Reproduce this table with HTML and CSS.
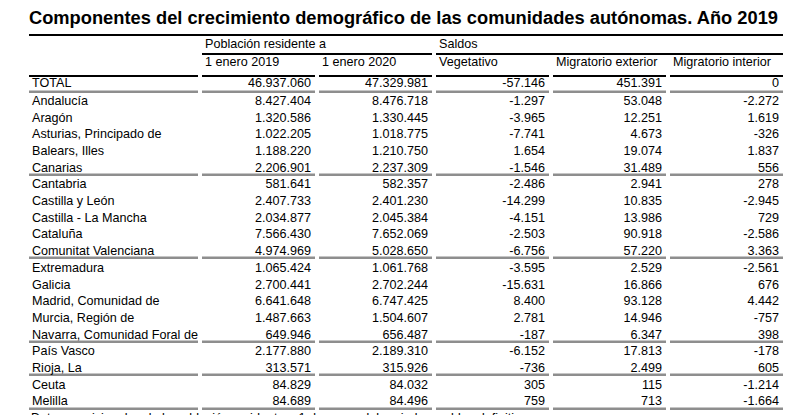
FILE: index.html
```html
<!DOCTYPE html>
<html lang="es">
<head>
<meta charset="utf-8">
<title>Componentes del crecimiento demográfico</title>
<link rel="stylesheet" href="styles.css">
</head>
<body>
<div class="page">
  <h1 class="title">Componentes del crecimiento demográfico de las comunidades autónomas. Año 2019</h1>
  <table class="data">
    <colgroup>
      <col class="c-label"><col class="c-num"><col class="c-num"><col class="c-num"><col class="c-num"><col class="c-num">
    </colgroup>
    <thead>
      <tr class="h1">
        <th class="blank"></th>
        <th colspan="2" class="grp">Población residente a</th>
        <th colspan="3" class="grp">Saldos</th>
      </tr>
      <tr class="h2">
        <th></th>
        <th>1 enero 2019</th>
        <th>1 enero 2020</th>
        <th>Vegetativo</th>
        <th>Migratorio exterior</th>
        <th>Migratorio interior</th>
      </tr>
    </thead>
    <tbody>
      <tr class="total sep"><td>TOTAL</td><td>46.937.060</td><td>47.329.981</td><td>-57.146</td><td>451.391</td><td>0</td></tr>
      <tr><td>Andalucía</td><td>8.427.404</td><td>8.476.718</td><td>-1.297</td><td>53.048</td><td>-2.272</td></tr>
      <tr><td>Aragón</td><td>1.320.586</td><td>1.330.445</td><td>-3.965</td><td>12.251</td><td>1.619</td></tr>
      <tr><td>Asturias, Principado de</td><td>1.022.205</td><td>1.018.775</td><td>-7.741</td><td>4.673</td><td>-326</td></tr>
      <tr><td>Balears, Illes</td><td>1.188.220</td><td>1.210.750</td><td>1.654</td><td>19.074</td><td>1.837</td></tr>
      <tr class="sep"><td>Canarias</td><td>2.206.901</td><td>2.237.309</td><td>-1.546</td><td>31.489</td><td>556</td></tr>
      <tr><td>Cantabria</td><td>581.641</td><td>582.357</td><td>-2.486</td><td>2.941</td><td>278</td></tr>
      <tr><td>Castilla y León</td><td>2.407.733</td><td>2.401.230</td><td>-14.299</td><td>10.835</td><td>-2.945</td></tr>
      <tr><td>Castilla - La Mancha</td><td>2.034.877</td><td>2.045.384</td><td>-4.151</td><td>13.986</td><td>729</td></tr>
      <tr><td>Cataluña</td><td>7.566.430</td><td>7.652.069</td><td>-2.503</td><td>90.918</td><td>-2.586</td></tr>
      <tr class="sep"><td>Comunitat Valenciana</td><td>4.974.969</td><td>5.028.650</td><td>-6.756</td><td>57.220</td><td>3.363</td></tr>
      <tr><td>Extremadura</td><td>1.065.424</td><td>1.061.768</td><td>-3.595</td><td>2.529</td><td>-2.561</td></tr>
      <tr><td>Galicia</td><td>2.700.441</td><td>2.702.244</td><td>-15.631</td><td>16.866</td><td>676</td></tr>
      <tr><td>Madrid, Comunidad de</td><td>6.641.648</td><td>6.747.425</td><td>8.400</td><td>93.128</td><td>4.442</td></tr>
      <tr><td>Murcia, Región de</td><td>1.487.663</td><td>1.504.607</td><td>2.781</td><td>14.946</td><td>-757</td></tr>
      <tr class="sep"><td>Navarra, Comunidad Foral de</td><td>649.946</td><td>656.487</td><td>-187</td><td>6.347</td><td>398</td></tr>
      <tr><td>País Vasco</td><td>2.177.880</td><td>2.189.310</td><td>-6.152</td><td>17.813</td><td>-178</td></tr>
      <tr class="sep"><td>Rioja, La</td><td>313.571</td><td>315.926</td><td>-736</td><td>2.499</td><td>605</td></tr>
      <tr><td>Ceuta</td><td>84.829</td><td>84.032</td><td>305</td><td>115</td><td>-1.214</td></tr>
      <tr class="sep"><td>Melilla</td><td>84.689</td><td>84.496</td><td>759</td><td>713</td><td>-1.664</td></tr>
    </tbody>
  </table>
  <p class="note">Datos provisionales de la población residente a 1 de enero del periodo y saldos definitivos</p>
</div>
</body>
</html>
```
FILE: styles.css
```css
html, body {
  margin: 0;
  padding: 0;
  background: #ffffff;
}

body {
  font-family: "Liberation Sans", Arial, sans-serif;
  color: #000000;
  overflow: hidden;
}

.page {
  padding: 8px 0 0 29px;
}

.title {
  margin: 0;
  width: 754px;
  font-size: 18.3px;
  font-weight: bold;
  line-height: 20px;
  padding-bottom: 6px;
  border-bottom: 2px solid #000000;
  white-space: nowrap;
}

.data {
  border-collapse: separate;
  border-spacing: 4px 0;
  margin-left: -4px;
  font-size: 12.6px;
  table-layout: fixed;
  width: 762px;
}

.c-label { width: 169px; }
.c-num { width: 113px; }

.data th {
  font-weight: normal;
  text-align: left;
  padding: 0 3px;
  white-space: nowrap;
}

.h1 th {
  height: 19px;
  padding-top: 1px;
  line-height: 14px;
  vertical-align: top;
  box-sizing: border-box;
}

.h1 th.grp {
  border-bottom: 2px solid #000000;
}

.h2 th {
  height: 20px;
  line-height: 14px;
  vertical-align: top;
  border-bottom: 2px solid #000000;
  padding-top: 0;
}

.data td {
  height: 16.7px;
  padding: 0 4px 0 3px;
  line-height: 14px;
  text-align: right;
  white-space: nowrap;
  vertical-align: middle;
}

.data td:first-child {
  text-align: left;
}

.data tr.total td {
  height: 15.6px;
  vertical-align: top;
  line-height: 13px;
}

.data tr.sep td {
  box-shadow: inset 0 -2px 0 #8e8e8e, inset 0 -3px 0 #c6c6c6;
}

.note {
  margin: 0;
  padding: 1px 0 0 2px;
  font-size: 12.6px;
  line-height: 14px;
  white-space: nowrap;
}
```
